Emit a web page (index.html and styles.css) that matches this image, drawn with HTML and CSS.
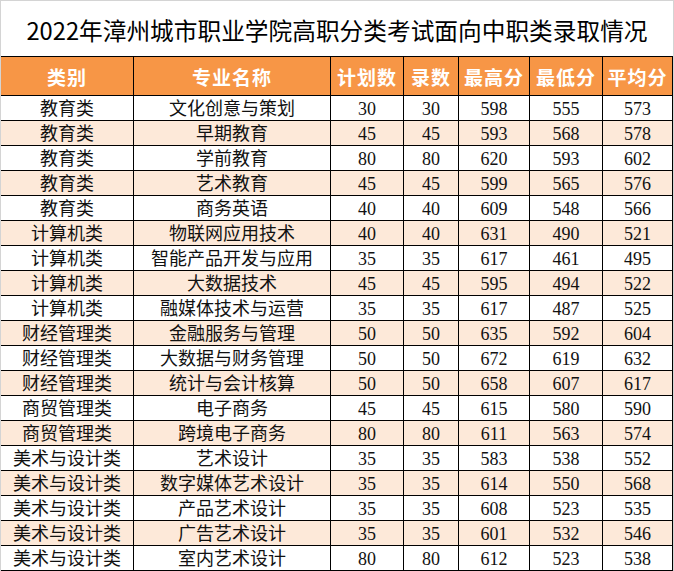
FILE: index.html
```html
<!DOCTYPE html>
<html lang="zh-CN">
<head>
<meta charset="utf-8">
<title>2022年漳州城市职业学院高职分类考试面向中职类录取情况</title>
<link rel="stylesheet" href="styles.css">
</head>
<body>
<div class="sheet">
  <h1 class="title">2022年漳州城市职业学院高职分类考试面向中职类录取情况</h1>
  <div class="grid">
    <div class="hd">类别</div><div class="hd">专业名称</div><div class="hd">计划数</div><div class="hd">录数</div><div class="hd">最高分</div><div class="hd">最低分</div><div class="hd">平均分</div>

    <div class="c">教育类</div><div class="c">文化创意与策划</div><div class="c">30</div><div class="c">30</div><div class="c">598</div><div class="c">555</div><div class="c">573</div>
    <div class="c s">教育类</div><div class="c s">早期教育</div><div class="c s">45</div><div class="c s">45</div><div class="c s">593</div><div class="c s">568</div><div class="c s">578</div>
    <div class="c">教育类</div><div class="c">学前教育</div><div class="c">80</div><div class="c">80</div><div class="c">620</div><div class="c">593</div><div class="c">602</div>
    <div class="c s">教育类</div><div class="c s">艺术教育</div><div class="c s">45</div><div class="c s">45</div><div class="c s">599</div><div class="c s">565</div><div class="c s">576</div>
    <div class="c">教育类</div><div class="c">商务英语</div><div class="c">40</div><div class="c">40</div><div class="c">609</div><div class="c">548</div><div class="c">566</div>
    <div class="c s">计算机类</div><div class="c s">物联网应用技术</div><div class="c s">40</div><div class="c s">40</div><div class="c s">631</div><div class="c s">490</div><div class="c s">521</div>
    <div class="c">计算机类</div><div class="c">智能产品开发与应用</div><div class="c">35</div><div class="c">35</div><div class="c">617</div><div class="c">461</div><div class="c">495</div>
    <div class="c s">计算机类</div><div class="c s">大数据技术</div><div class="c s">45</div><div class="c s">45</div><div class="c s">595</div><div class="c s">494</div><div class="c s">522</div>
    <div class="c">计算机类</div><div class="c">融媒体技术与运营</div><div class="c">35</div><div class="c">35</div><div class="c">617</div><div class="c">487</div><div class="c">525</div>
    <div class="c s">财经管理类</div><div class="c s">金融服务与管理</div><div class="c s">50</div><div class="c s">50</div><div class="c s">635</div><div class="c s">592</div><div class="c s">604</div>
    <div class="c">财经管理类</div><div class="c">大数据与财务管理</div><div class="c">50</div><div class="c">50</div><div class="c">672</div><div class="c">619</div><div class="c">632</div>
    <div class="c s">财经管理类</div><div class="c s">统计与会计核算</div><div class="c s">50</div><div class="c s">50</div><div class="c s">658</div><div class="c s">607</div><div class="c s">617</div>
    <div class="c">商贸管理类</div><div class="c">电子商务</div><div class="c">45</div><div class="c">45</div><div class="c">615</div><div class="c">580</div><div class="c">590</div>
    <div class="c s">商贸管理类</div><div class="c s">跨境电子商务</div><div class="c s">80</div><div class="c s">80</div><div class="c s">611</div><div class="c s">563</div><div class="c s">574</div>
    <div class="c">美术与设计类</div><div class="c">艺术设计</div><div class="c">35</div><div class="c">35</div><div class="c">583</div><div class="c">538</div><div class="c">552</div>
    <div class="c s">美术与设计类</div><div class="c s">数字媒体艺术设计</div><div class="c s">35</div><div class="c s">35</div><div class="c s">614</div><div class="c s">550</div><div class="c s">568</div>
    <div class="c">美术与设计类</div><div class="c">产品艺术设计</div><div class="c">35</div><div class="c">35</div><div class="c">608</div><div class="c">523</div><div class="c">535</div>
    <div class="c s">美术与设计类</div><div class="c s">广告艺术设计</div><div class="c s">35</div><div class="c s">35</div><div class="c s">601</div><div class="c s">532</div><div class="c s">546</div>
    <div class="c">美术与设计类</div><div class="c">室内艺术设计</div><div class="c">80</div><div class="c">80</div><div class="c">612</div><div class="c">523</div><div class="c">538</div>
  </div>
</div>
</body>
</html>
```
FILE: styles.css
```css
* { box-sizing: border-box; }
html, body { margin: 0; padding: 0; background: #ffffff; }
.sheet {
  width: 674px;
  height: 571px;
  border-top: 1px solid #d4d4d4;
  border-left: 1px solid #d4d4d4;
  border-right: 1px solid #d4d4d4;
  overflow: hidden;
}
.title {
  margin: 0;
  height: 55px;
  display: flex;
  align-items: center;
  justify-content: center;
  font-family: "Noto Sans CJK SC", sans-serif;
  font-weight: 400;
  font-size: 23.7px;
  color: #000;
  padding-top: 2px;
  white-space: nowrap;
}
.grid {
  display: grid;
  grid-template-columns: 133px 197px 73px 55px 71px 73px 70px;
  grid-template-rows: 39px repeat(19, 25px);
  border-top: 1px solid #000;
  width: 672px;
}
.hd, .c {
  display: flex;
  align-items: center;
  justify-content: center;
  border-right: 1px solid #000;
  border-bottom: 1px solid #000;
  white-space: nowrap;
}
.hd {
  background: #f79646;
  color: #ffffff;
  font-family: "Noto Sans CJK SC", sans-serif;
  font-weight: 700;
  font-size: 19px;
  letter-spacing: 1px;
}
.c {
  background: #ffffff;
  color: #111;
  font-family: "Liberation Serif", "Noto Sans CJK SC", serif;
  font-size: 18px;
  line-height: 1;
  padding-top: 1px;
}
.c.s { background: #fde9d9; }
```
